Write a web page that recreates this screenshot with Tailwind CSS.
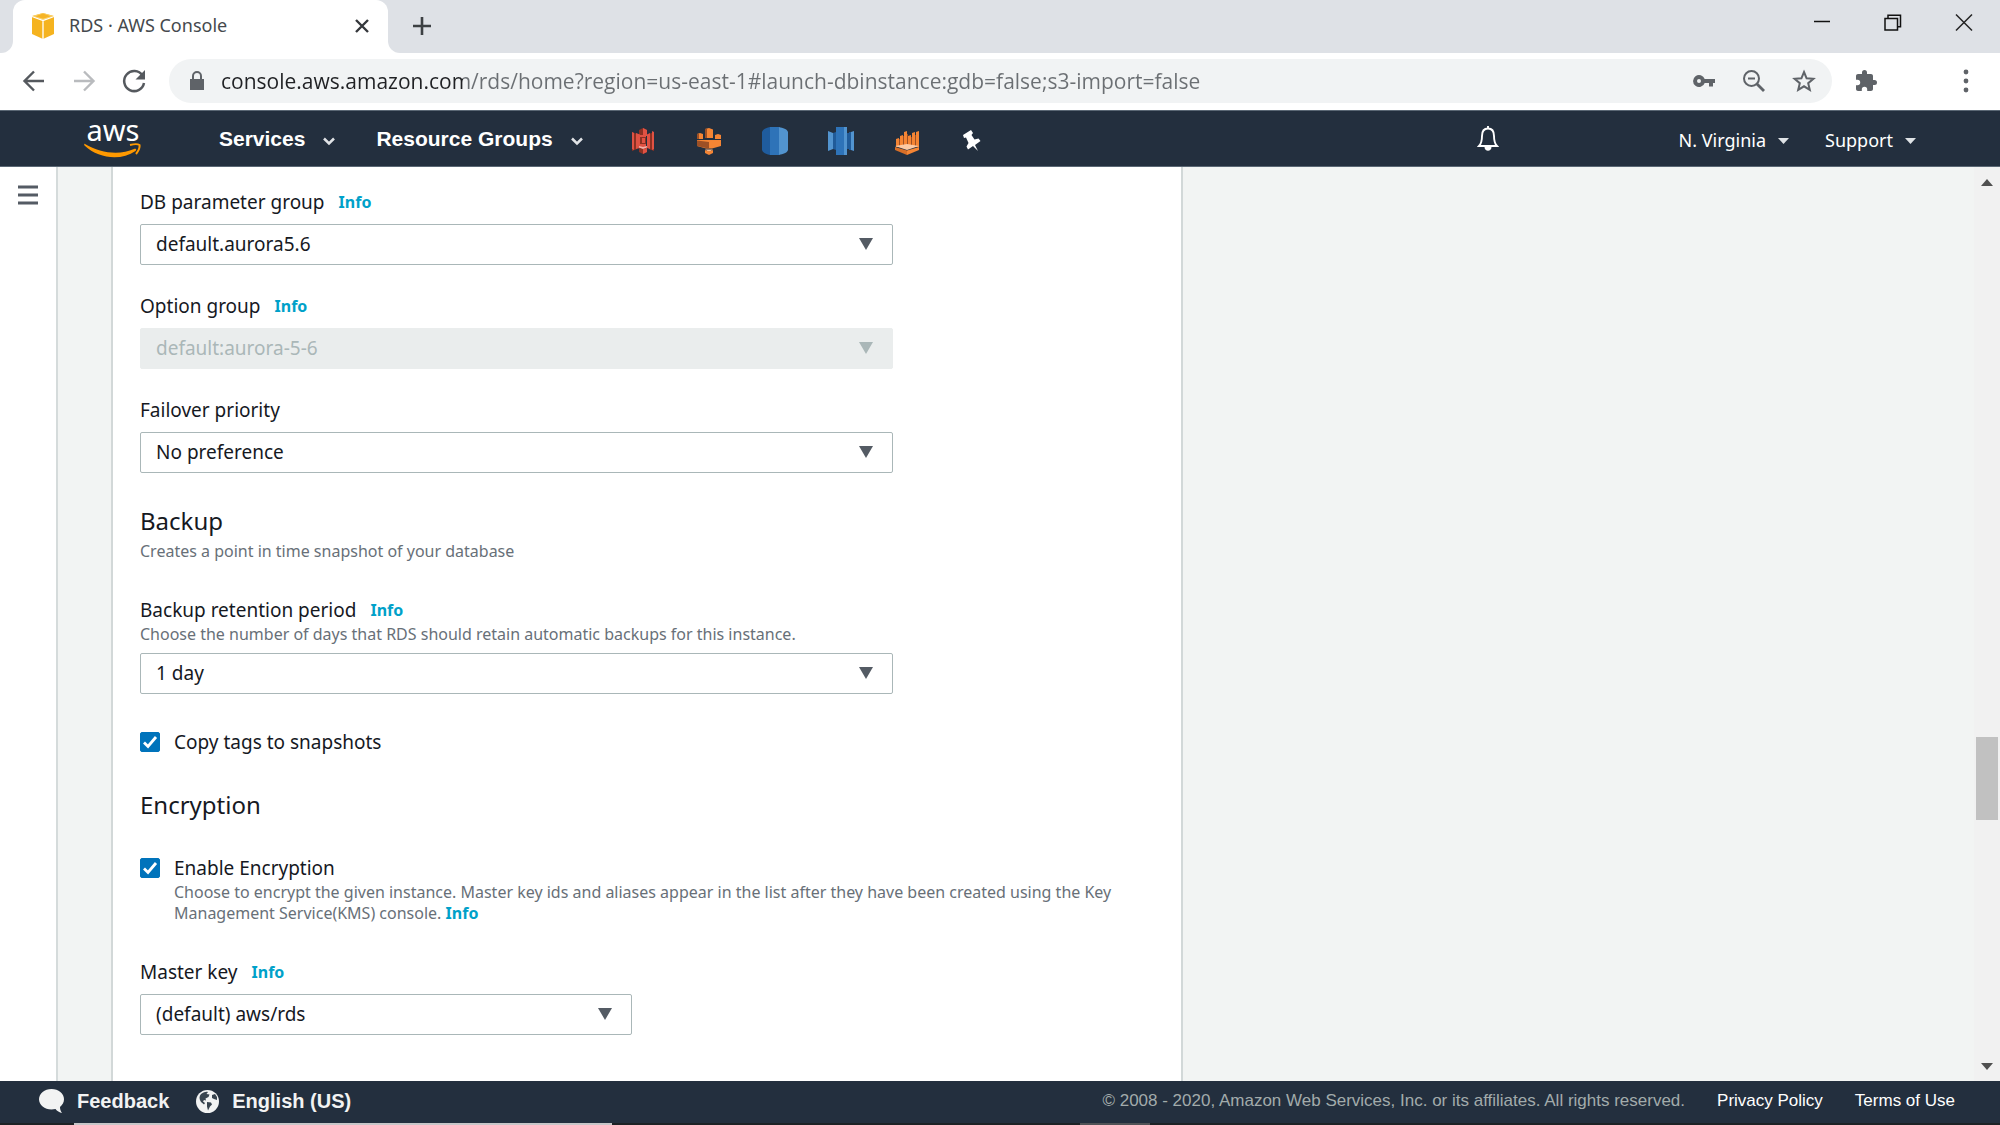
<!DOCTYPE html>
<html lang="en">
<head>
    <meta charset="UTF-8">
    <meta name="viewport" content="width=device-width, initial-scale=1.0">
    <title>RDS · AWS Console</title>
    <script src="https://cdn.jsdelivr.net/npm/@tailwindcss/browser@4"></script>
</head>
<body class="h-screen flex flex-col overflow-hidden bg-white font-['Noto_Sans',sans-serif] text-[#16191f]">

<!-- Browser tabs -->
<div class="h-[53px] shrink-0 flex bg-[#dee1e6]">
    <div class="w-[13px] bg-white"><div class="h-full rounded-br-xl bg-[#dee1e6]"></div></div>
    <div class="w-[375px] flex items-center rounded-t-xl bg-white pl-[18px] pr-4 pb-0.5">
        <svg class="w-6 h-7" viewBox="0 0 24 28">
            <path fill="#f5b31f" d="M12 1 23 4v18l-11 5-11-5V4z"/>
            <path fill="#fbd573" d="M12 1 22 4l-10 4L2 4z"/>
            <path fill="#f6b426" d="M12 1.500 20 4.200 12 6.800 4 4.200z"/>
            <path stroke="#fff" stroke-width="1.300" fill="none" d="M1 4.500 12 8.500 23 4.500M12 8.500V27"/>
        </svg>
        <span class="ml-[14px] text-[18px] text-[#45494d]">RDS · AWS Console</span>
        <button class="ml-auto w-5 h-5" aria-label="Close tab">
            <svg viewBox="0 0 20 20" stroke="#35383c" stroke-width="2.400"><path d="M4 4l12 12M16 4 4 16"/></svg>
        </button>
    </div>
    <div class="w-3 bg-white"><div class="h-full rounded-bl-xl bg-[#dee1e6]"></div></div>
    <button class="w-6 ml-2.5 pb-0.5" aria-label="New tab">
        <svg viewBox="0 0 24 24" stroke="#3c4043" stroke-width="2.600"><path d="M12 3v18M3 12h18"/></svg>
    </button>
    <div class="ml-auto flex items-start gap-[47px] pt-3 pr-6">
        <button class="w-6 h-6" aria-label="Minimize"><svg viewBox="0 0 24 24" stroke="#111" stroke-width="1.500"><path d="M4 9.500h16"/></svg></button>
        <button class="w-6 h-6" aria-label="Restore"><svg viewBox="0 0 24 24" fill="none" stroke="#111" stroke-width="1.500"><path d="M4 6.500h12.500V18H4zM7 6.500V3.200h12.500v11.500h-3"/></svg></button>
        <button class="w-6 h-6" aria-label="Close"><svg viewBox="0 0 24 24" stroke="#222" stroke-width="1.500"><path d="M4 2.500l16 16M20 2.500 4 18.500"/></svg></button>
    </div>
</div>

<!-- Address bar -->
<div class="h-[57px] shrink-0 flex items-center bg-white pb-0.5 pl-5">
    <div class="flex items-center gap-[22px] mr-[21px]">
        <button class="w-7 h-7" aria-label="Back"><svg viewBox="0 0 28 28" fill="none" stroke="#55595e" stroke-width="2.400"><path d="M24 14H5M14 4.500 4.500 14l9.500 9.500"/></svg></button>
        <button class="w-7 h-7" aria-label="Forward"><svg viewBox="0 0 28 28" fill="none" stroke="#b9bbbe" stroke-width="2.400"><path d="M4 14h19M14 4.500l9.500 9.500-9.500 9.500"/></svg></button>
        <button class="w-7 h-7" aria-label="Reload"><svg viewBox="0 0 28 28" fill="none" stroke="#55595e" stroke-width="2.500"><path d="M22.500 8.500A10 10 0 1 0 24 16"/><path fill="#55595e" stroke="none" d="M25 3v9.500h-9.500z"/></svg></button>
    </div>
    <div class="flex-1 h-11 flex items-center rounded-full bg-[#f1f3f4] pl-5 pr-4">
        <svg class="w-4 h-5 shrink-0" viewBox="0 0 16 20" fill="#5f6368"><path d="M1 8h14v11H1z"/><path fill="none" stroke="#5f6368" stroke-width="2" d="M4 8V5a4 4 0 0 1 8 0v3"/></svg>
        <input class="flex-1 ml-4 h-9 outline-none font-['Open_Sans',sans-serif] text-[21px] text-transparent bg-clip-text bg-[linear-gradient(to_right,#202124_242px,#6b6f73_242px)]" type="text" aria-label="Address" value="console.aws.amazon.com/rds/home?region=us-east-1#launch-dbinstance:gdb=false;s3-import=false">
        <div class="flex items-center gap-[26px] text-[#5f6368]">
            <button class="w-6 h-6" aria-label="Passwords"><svg viewBox="0 0 24 24" fill="currentColor"><path fill-rule="evenodd" d="M12.700 10A6 6 0 1 0 12.700 14H17v3.500h4V14h2v-4zM7 14a2 2 0 1 1 0-4 2 2 0 0 1 0 4z"/></svg></button>
            <button class="w-6 h-6" aria-label="Zoom"><svg viewBox="0 0 24 24" fill="none" stroke="currentColor" stroke-width="2"><circle cx="9.500" cy="9.500" r="7.500"/><path d="M6 9.500h7"/><path stroke-width="2.800" d="M15 15l7 7"/></svg></button>
            <button class="w-6 h-6" aria-label="Bookmark"><svg viewBox="0 0 24 24" fill="none" stroke="currentColor" stroke-width="2"><path d="m12 3 2.600 6.300 6.800.500-5.200 4.400 1.600 6.700L12 17.300l-5.800 3.600 1.600-6.700-5.200-4.400 6.800-.500z"/></svg></button>
        </div>
    </div>
    <button class="ml-[22px] w-6 h-6 text-[#5f6368]" aria-label="Extensions"><svg viewBox="0 0 24 24" fill="currentColor"><path d="M20.500 11H19V7c0-1.100-.900-2-2-2h-4V3.500a2.500 2.500 0 0 0-5 0V5H4c-1.100 0-2 .900-2 2v3.800h1.500a2.700 2.700 0 0 1 0 5.400H2V20c0 1.100.900 2 2 2h3.800v-1.500a2.700 2.700 0 0 1 5.400 0V22H17c1.100 0 2-.900 2-2v-4h1.500a2.500 2.500 0 0 0 0-5z"/></svg></button>
    <button class="ml-[76px] mr-[22px] w-6 h-6 text-[#5f6368]" aria-label="Menu"><svg viewBox="0 0 24 24" fill="currentColor"><circle cx="12" cy="3" r="2.400"/><circle cx="12" cy="12" r="2.400"/><circle cx="12" cy="21" r="2.400"/></svg></button>
</div>

<!-- Console navigation -->
<header class="h-[57px] shrink-0 flex items-center bg-[#232f3e] border-y border-[#5a6774] pl-[84px] pr-[84px] text-white">
    <a class="w-[58px] flex flex-col items-center" href="#" aria-label="AWS home">
        <span class="text-[29px] leading-[20px] h-[23px]">aws</span>
        <svg class="w-[58px] h-[15px]" viewBox="0 0 58 15">
            <path fill="#ff9900" d="M1 1C17 11 37 12 50 6c2-1 3 1 1.500 2C37 18 15 16 .500 2.500 0 1.500 0 .500 1 1z"/>
            <path fill="none" stroke="#ff9900" stroke-width="2" d="M46 2c4-1 8-1 9.500 0 .500 3-1 6-3.500 9"/>
        </svg>
    </a>
    <button class="ml-[77px] flex items-center gap-[17px] font-['Liberation_Sans',sans-serif] text-[21px] font-bold">Services
        <svg class="w-3.5 h-3.5 mt-1" viewBox="0 0 14 14" fill="none" stroke="#e0e3e6" stroke-width="2.500"><path d="M2 4.500 7 9.500l5-5"/></svg>
    </button>
    <button class="ml-[40px] flex items-center gap-[17px] font-['Liberation_Sans',sans-serif] text-[21px] font-bold">Resource Groups
        <svg class="w-3.5 h-3.5 mt-1" viewBox="0 0 14 14" fill="none" stroke="#e0e3e6" stroke-width="2.500"><path d="M2 4.500 7 9.500l5-5"/></svg>
    </button>
    <div class="ml-[45px] flex items-center gap-[38px] pt-1">
        <a class="w-7 h-7" href="#" aria-label="S3"><svg viewBox="0 0 28 28">
            <path fill="#8c3123" d="M3 5 8 7v15l-5 2zM25 5l-5 2v15l5 2zM10 3l4-2 4 2v6h-8zM10 20h8v5l-4 2-4-2z"/>
            <path fill="#e05243" d="M3 5l2 1v17l-2-1zM23 4l2 1v17l-2 1zM14 1l4 2v6h-4zM7 6l4 1.500V21l-4 1zM21 6l-3 1.500V21l3 1zM11 8h6v12h-6zM14 22l4-1v4l-4 2z"/>
            <path fill="#8c3123" d="M11 10h6v7h-6z"/><path fill="#e05243" d="M13 11h3v5h-3z"/><path fill="#f2b0a9" d="m10 19 4 1 4-1v1.500L14 22l-4-1.500z"/>
        </svg></a>
        <a class="w-7 h-7" href="#" aria-label="Kinesis"><svg viewBox="0 0 28 28">
            <path fill="#f58534" d="M10 2 14 1l4 1.500V11h-8zM2 7l3-1 3 1v5H2zM20 8l3-1 3 1v4h-6zM2 13h24v6l-9 2.500H11L2 19z"/>
            <path fill="#9d5025" d="M2 13.500 14 15v6h-3l-9-2zM10 2l2-.500V11h-2zM2 7l2-.500V12H2z"/>
            <path fill="#fbbf93" d="M10 22.500h8L14 25z"/><path fill="#f58534" d="M10 23l4 1.500L18 23v3l-4 2-4-2z"/>
        </svg></a>
        <a class="w-7 h-7" href="#" aria-label="RDS"><svg viewBox="0 0 28 28">
            <path fill="#1f5c9e" d="M1 5c1-3 4-4 8-5v28c-4-1-7-2-8-5z"/><path fill="#2e73b8" d="M9 0h9v28H9z"/><path fill="#5294cf" d="M18 0c4 1 8 2 9 5v18c-1 3-5 4-9 5z"/>
        </svg></a>
        <a class="w-7 h-7" href="#" aria-label="Redshift"><svg viewBox="0 0 28 28">
            <path fill="#5294cf" d="M1 4 6 6v16l-5 2z"/><path fill="#205b99" d="m6 6 3-1v18l-3-1zM20 6l3 0v16l-3 0z"/><path fill="#2e73b8" d="M9 0h9v28H9z"/><path fill="#5294cf" d="M17 0h3v28h-3zM24 5l3-1v20l-3-1z"/><path fill="#205b99" d="M22 5h2v18h-2z"/>
        </svg></a>
        <a class="w-7 h-7" href="#" aria-label="EMR"><svg viewBox="0 0 28 28">
            <path fill="#f58534" d="M3 12l3-1v9H3zM7 9l3-1v12H7zM11 5l3-1v15h-3zM15 9l3-1v11h-3zM19 6l3-1v14h-3zM23 5l3-1v16h-3z"/>
            <path fill="#9d5025" d="M6 12h1v8H6zM10 9h1v10h-1zM14 7h1v11h-1zM18 10h1v8h-1zM22 8h1v11h-1z"/>
            <path fill="#fcc9a3" d="m2 19 12-2 12 2-12 4z"/><path fill="#d86f28" d="m2 20 12 3.500V28L2 23z"/><path fill="#f58534" d="m26 20-12 3.500V28l12-5z"/>
        </svg></a>
        <button class="w-6 h-6" aria-label="Pin shortcuts"><svg viewBox="0 0 24 24" fill="#fff"><path d="m4 6 8-5 2 3-1.500 2 3 4.500 4-1 2 2.500-5.500 4 3 6-5-5-5 3.500-1.500-3L9.500 14 7 8.500 5 9z"/></svg></button>
    </div>
    <button class="ml-auto w-[22px] h-[27px]" aria-label="Notifications"><svg viewBox="0 0 22 27" fill="none" stroke="#fff" stroke-width="1.900"><path d="M11 1v2M2 21c1.500-1.500 3-3 3-10C5 6 7.500 3.500 11 3.500S17 6 17 11c0 7 1.500 8.500 3 10z"/><path fill="#fff" stroke="none" d="M7.500 22h7c0 5-7 5-7 0z"/></svg></button>
    <button class="ml-[180px] flex items-center gap-3 pt-1 text-[18px]">N. Virginia
        <svg class="w-[11px] h-1.5" viewBox="0 0 11 6" fill="#dfe3e6"><path d="M0 0h11L5.500 6z"/></svg>
    </button>
    <button class="ml-9 flex items-center gap-3 pt-1 text-[18px]">Support
        <svg class="w-[11px] h-1.5" viewBox="0 0 11 6" fill="#dfe3e6"><path d="M0 0h11L5.500 6z"/></svg>
    </button>
</header>

<div class="flex-1 min-h-0 flex bg-[#f2f4f3]">
    <aside class="w-[58px] shrink-0 bg-white border-r-2 border-[#d5dbdb] pt-[18px] pl-[18px]">
        <button class="w-5 h-5" aria-label="Open navigation"><svg viewBox="0 0 20 20" stroke="#545b64" stroke-width="3"><path d="M0 2h20M0 10h20M0 18h20"/></svg></button>
    </aside>

    <!-- Database settings -->
    <main class="ml-[53px] w-[1072px] overflow-hidden bg-white border-x-2 border-[#d2d8d8] pt-[23px] px-[27px]">
        <div class="flex flex-col gap-[29px]">
            <div>
                <div class="flex items-center gap-3.5 mb-2.5 leading-6"><label class="text-[19px]" for="paramGroup">DB parameter group</label><a class="text-base leading-6 font-bold text-[#00a1c9]" href="#">Info</a></div>
                <div class="relative w-[753px] max-w-full">
                    <select id="paramGroup" class="appearance-none w-full h-[41px] rounded-xs border border-[#aab7b8] bg-white pl-[15px] text-[19px]"><option>default.aurora5.6</option></select>
                    <svg class="absolute right-5 top-3.5 w-3.5 h-3 pointer-events-none" viewBox="0 0 14 12" fill="#545b64"><path d="M0 0h14L7 12z"/></svg>
                </div>
            </div>
            <div>
                <div class="flex items-center gap-3.5 mb-2.5 leading-6"><label class="text-[19px]" for="optionGroup">Option group</label><a class="text-base leading-6 font-bold text-[#00a1c9]" href="#">Info</a></div>
                <div class="relative w-[753px] max-w-full">
                    <select id="optionGroup" class="appearance-none w-full h-[41px] rounded-xs border border-[#eaeded] bg-[#eaeded] pl-[15px] text-[19px] text-[#aab7b8] disabled:opacity-100" disabled><option>default:aurora-5-6</option></select>
                    <svg class="absolute right-5 top-3.5 w-3.5 h-3 pointer-events-none" viewBox="0 0 14 12" fill="#aab7b8"><path d="M0 0h14L7 12z"/></svg>
                </div>
            </div>
            <div>
                <div class="flex items-center mb-2.5 leading-6"><label class="text-[19px]" for="failover">Failover priority</label></div>
                <div class="relative w-[753px] max-w-full">
                    <select id="failover" class="appearance-none w-full h-[41px] rounded-xs border border-[#aab7b8] bg-white pl-[15px] text-[19px]"><option>No preference</option></select>
                    <svg class="absolute right-5 top-3.5 w-3.5 h-3 pointer-events-none" viewBox="0 0 14 12" fill="#545b64"><path d="M0 0h14L7 12z"/></svg>
                </div>
            </div>
        </div>

        <h2 class="mt-8 text-2xl leading-8">Backup</h2>
        <p class="mt-1 text-base leading-[21px] text-[#687078]">Creates a point in time snapshot of your database</p>

        <div class="mt-9">
            <div class="flex items-center gap-3.5 leading-6"><label class="text-[19px]" for="retention">Backup retention period</label><a class="text-base leading-6 font-bold text-[#00a1c9]" href="#">Info</a></div>
            <p class="mb-2 mt-0.5 text-base leading-[21px] text-[#687078]">Choose the number of days that RDS should retain automatic backups for this instance.</p>
            <div class="relative w-[753px] max-w-full">
                <select id="retention" class="appearance-none w-full h-[41px] rounded-xs border border-[#aab7b8] bg-white pl-[15px] text-[19px]"><option>1 day</option></select>
                <svg class="absolute right-5 top-3.5 w-3.5 h-3 pointer-events-none" viewBox="0 0 14 12" fill="#545b64"><path d="M0 0h14L7 12z"/></svg>
            </div>
        </div>

        <div class="mt-9 flex items-center gap-3.5">
            <span class="relative w-5 h-5">
                <input id="copyTags" type="checkbox" class="block appearance-none w-5 h-5 rounded-xs bg-white border border-[#687078] checked:bg-[#0073bb] checked:border-[#0073bb]" checked>
                <svg class="absolute inset-0 pointer-events-none" viewBox="0 0 20 20" fill="none" stroke="#fff" stroke-width="2.800"><path d="m4 10.500 4 4L16 5"/></svg>
            </span>
            <label class="text-[19px] leading-6" for="copyTags">Copy tags to snapshots</label>
        </div>

        <h2 class="mt-[35px] text-2xl leading-8">Encryption</h2>

        <div class="mt-[35px] flex gap-3.5">
            <span class="relative mt-0.5 w-5 h-5 shrink-0">
                <input id="encrypt" type="checkbox" class="block appearance-none w-5 h-5 rounded-xs bg-white border border-[#687078] checked:bg-[#0073bb] checked:border-[#0073bb]" checked>
                <svg class="absolute inset-0 pointer-events-none" viewBox="0 0 20 20" fill="none" stroke="#fff" stroke-width="2.800"><path d="m4 10.500 4 4L16 5"/></svg>
            </span>
            <div>
                <label class="block text-[19px] leading-6" for="encrypt">Enable Encryption</label>
                <p class="mt-0.5 text-base leading-[21px] text-[#687078]">Choose to encrypt the given instance. Master key ids and aliases appear in the list after they have been created using the Key Management Service(KMS) console. <a class="font-bold text-[#00a1c9]" href="#">Info</a></p>
            </div>
        </div>

        <div class="mt-9">
            <div class="flex items-center gap-3.5 mb-2.5 leading-6"><label class="text-[19px]" for="masterKey">Master key</label><a class="text-base leading-6 font-bold text-[#00a1c9]" href="#">Info</a></div>
            <div class="relative w-[492px] max-w-full">
                <select id="masterKey" class="appearance-none w-full h-[41px] rounded-xs border border-[#aab7b8] bg-white pl-[15px] text-[19px]"><option>(default) aws/rds</option></select>
                <svg class="absolute right-5 top-3.5 w-3.5 h-3 pointer-events-none" viewBox="0 0 14 12" fill="#545b64"><path d="M0 0h14L7 12z"/></svg>
            </div>
        </div>
    </main>

    <!-- Scrollbar -->
    <div class="ml-auto w-[26px] flex flex-col items-center bg-[#f1f1f1]">
        <div class="h-[30px] flex items-center"><svg class="w-3 h-[7px]" viewBox="0 0 12 7" fill="#505050"><path d="M6 0l6 7H0z"/></svg></div>
        <div class="grow-[70]"></div>
        <div class="w-[22px] h-[83px] bg-[#c1c1c1]"></div>
        <div class="grow-[30]"></div>
        <div class="h-[30px] flex items-center"><svg class="w-3 h-[7px]" viewBox="0 0 12 7" fill="#505050"><path d="M0 0h12L6 7z"/></svg></div>
    </div>
</div>

<footer class="h-[42px] shrink-0 flex items-center bg-[#232f3e] pl-[39px] pr-[45px] pb-0.5 font-['Liberation_Sans',sans-serif] text-[17px] text-white">
    <a class="flex items-center gap-[13px] text-xl font-bold text-[#f2f3f3]" href="#">
        <svg class="w-[25px] h-6" viewBox="0 0 25 24" fill="#f2f3f3"><path d="M12.500 0C5.500 0 0 4.500 0 10.300S5.500 20.500 12.500 20.500c1.500 0 3-.200 4-.500 1.500 2 4 3.500 6.500 4-1.500-2-2-4-2-6 2.500-2 4-4.600 4-7.700C25 4.500 19.500 0 12.500 0z"/></svg>Feedback
    </a>
    <button class="ml-[27px] flex items-center gap-[13px] text-xl font-bold text-[#f2f3f3]">
        <svg class="w-[23px] h-[23px]" viewBox="0 0 23 23"><circle cx="11.500" cy="11.500" r="11.500" fill="#f2f3f3"/><path fill="#38444f" d="M5 4c3-2 5-2.500 7-2l-1.500 2 3 .500-1 2.500-3 1.500.500 2-2-.500-1 1.500 2 1.500-1 1.500-3-2.500C3 9 3 6 5 4zM16 5l3-1 2 3v3l-3-1-2-1zM11 12l4 .500 1 2-2 2-2 4-1-4z"/></svg>English (US)
    </button>
    <span class="ml-auto text-[#a2abab]">© 2008 - 2020, Amazon Web Services, Inc. or its affiliates. All rights reserved.</span>
    <a class="ml-8" href="#">Privacy Policy</a>
    <a class="ml-8" href="#">Terms of Use</a>
</footer>
<div class="h-0.5 shrink-0 flex bg-[#1d2225]"><div class="ml-[74px] w-[538px] bg-[#c6c6c8]"></div><div class="ml-[468px] w-[70px] bg-[#505356]"></div></div>

</body>
</html>
